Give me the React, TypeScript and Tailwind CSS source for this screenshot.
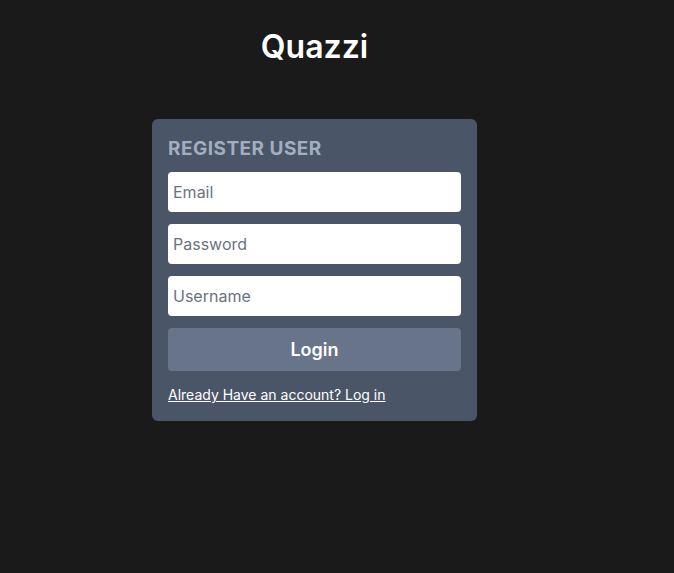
export default function App() {
  return (
    <div
      className="min-h-screen w-full bg-[#1a1a1a]"
      style={{ fontFamily: "Inter, 'Noto Sans', sans-serif" }}
    >
      <div className="w-[629px] flex flex-col items-center">
        <h1 className="mt-[28px] text-[32px] leading-[38px] font-semibold text-white">Quazzi</h1>
        <div className="mt-[53px] w-[325px] bg-[#4a5568] rounded-md p-4 flex flex-col">
          <h2 className="mt-[2px] text-[19px] leading-[24px] font-bold tracking-wide text-[#a0aec0]">REGISTER USER</h2>
          <form className="mt-[11px] flex flex-col gap-3" onSubmit={e => e.preventDefault()}>
            <input
              type="email"
              placeholder="Email"
              className="h-10 w-full bg-white rounded-sm px-[5px] text-base text-gray-800 placeholder:text-[#6b7280] outline-none"
            />
            <input
              type="password"
              placeholder="Password"
              className="h-10 w-full bg-white rounded-sm px-[5px] text-base text-gray-800 placeholder:text-[#6b7280] outline-none"
            />
            <input
              type="text"
              placeholder="Username"
              className="h-10 w-full bg-white rounded-sm px-[5px] text-base text-gray-800 placeholder:text-[#6b7280] outline-none"
            />
            <button className="h-[43px] w-full bg-[#677489] rounded text-white text-lg font-semibold">Login</button>
          </form>
          <a href="#" className="mt-[14px] text-sm leading-5 text-white underline">
            Already Have an account? Log in
          </a>
        </div>
      </div>
    </div>
  );
}
